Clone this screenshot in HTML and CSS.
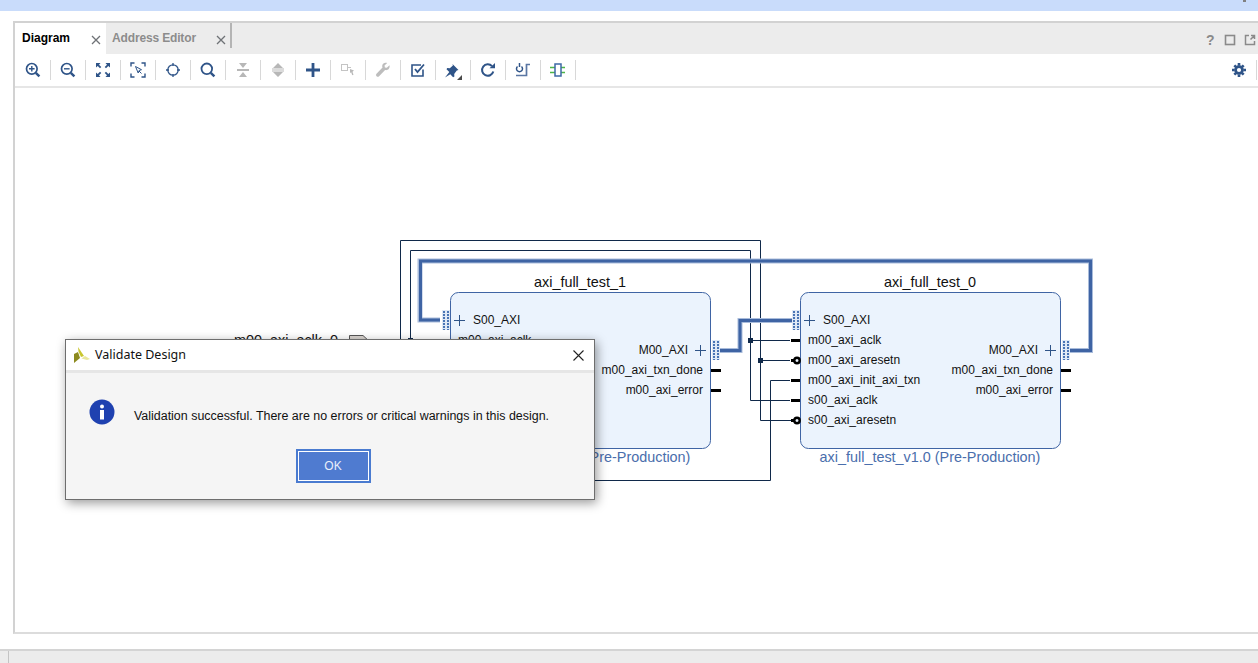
FILE: index.html
```html
<!DOCTYPE html>
<html lang="en">
<head>
<meta charset="utf-8">
<title>Validate Design</title>
<link rel="stylesheet" href="styles.css">
</head>
<body>
<div class="topbar"><span class="topmark"></span></div>
<main class="panel">
  <div class="tabbar">
    <div class="tab tab-active"><span>Diagram</span>
      <svg class="tabx" width="10" height="10" viewBox="0 0 10 10"><path d="M1 1l8 8M9 1l-8 8" stroke="#6f7276" stroke-width="1.3" fill="none"/></svg>
    </div>
    <div class="tab tab-idle"><span>Address Editor</span>
      <svg class="tabx" width="10" height="10" viewBox="0 0 10 10"><path d="M1 1l8 8M9 1l-8 8" stroke="#6f7276" stroke-width="1.3" fill="none"/></svg>
    </div>
    <div class="tabsep"></div>
    <div class="tabtools">
      <span class="help">?</span>
      <svg width="12" height="12" viewBox="0 0 12 12"><rect x="1.5" y="1.5" width="9" height="9" fill="none" stroke="#8a8a8a" stroke-width="1.6"/></svg>
      <svg width="12" height="12" viewBox="0 0 12 12"><path d="M5 1.5H1.5v9h9V7M7 1.5h3.5V5M10 2L6.5 5.5" fill="none" stroke="#8a8a8a" stroke-width="1.5"/></svg>
    </div>
  </div>
  <div class="toolbar">
    <div class="tool"><svg width="16" height="16" viewBox="0 0 16 16"><circle cx="6.8" cy="6.8" r="5.3" fill="none" stroke="#2f5488" stroke-width="1.7"/><path d="M4 6.8h5.6M6.8 4v5.6" stroke="#2f5488" stroke-width="1.4"/><path d="M10.8 10.8l3.6 3.6" stroke="#2f5488" stroke-width="2.4"/></svg></div>
    <div class="tool"><svg width="16" height="16" viewBox="0 0 16 16"><circle cx="6.8" cy="6.8" r="5.3" fill="none" stroke="#2f5488" stroke-width="1.7"/><path d="M4 6.8h5.6" stroke="#2f5488" stroke-width="1.4"/><path d="M10.8 10.8l3.6 3.6" stroke="#2f5488" stroke-width="2.4"/></svg></div>
    <div class="tool"><svg width="16" height="16" viewBox="0 0 16 16"><path d="M1 1h4.5L4 2.7 6.3 5 5 6.3 2.7 4 1 5.5zM15 1v4.5L13.3 4 11 6.3 9.7 5 12 2.7 10.5 1zM1 15v-4.5L2.7 12 5 9.7 6.300 11 4 13.300 5.500 15zM15 15h-4.500L12 13.300 9.700 11 11 9.700 13.300 12 15 10.500z" fill="#2f5488"/></svg></div>
    <div class="tool"><svg width="16" height="16" viewBox="0 0 16 16"><path d="M1 4.500V1h3.500M11.500 1H15v3.500M15 11.500V15h-3.500M4.500 15H1v-3.500" fill="none" stroke="#2f5488" stroke-width="1.400"/><path d="M5.500 4.500l6 3.200-2.400.8-.9 2.500z" fill="#fff" stroke="#2f5488" stroke-width="1"/><path d="M9 9l2.500 2.500" stroke="#2f5488" stroke-width="1"/></svg></div>
    <div class="tool"><svg width="16" height="16" viewBox="0 0 16 16"><circle cx="8" cy="8" r="5.200" fill="none" stroke="#2f5488" stroke-width="1.300"/><path d="M8 1v3M8 12v3M1 8h3M12 8h3" stroke="#2f5488" stroke-width="1.300"/></svg></div>
    <div class="tool"><svg width="16" height="16" viewBox="0 0 16 16"><circle cx="6.800" cy="6.800" r="5.300" fill="none" stroke="#2f5488" stroke-width="1.800"/><path d="M10.800 10.800l3.600 3.600" stroke="#2f5488" stroke-width="2.400"/></svg></div>
    <div class="tool"><svg width="14" height="16" viewBox="0 0 14 16"><path d="M1 7.500h12" stroke="#b7b7b7" stroke-width="1"/><path d="M1 8.500h12" stroke="#b7b7b7" stroke-width="1"/><path d="M3 1h8L7 6zM3 15h8L7 10z" fill="#b7b7b7"/></svg></div>
    <div class="tool"><svg width="14" height="16" viewBox="0 0 14 16"><path d="M1 7h12M1 9h12" stroke="#b7b7b7" stroke-width="1"/><path d="M2 6l5-5 5 5zM2 10l5 5 5-5z" fill="#b7b7b7"/></svg></div>
    <div class="tool"><svg width="14" height="14" viewBox="0 0 14 14"><path d="M7 0v14M0 7h14" stroke="#2f5488" stroke-width="2.800"/></svg></div>
    <div class="tool"><svg width="16" height="14" viewBox="0 0 16 14"><rect x="1.500" y="1.500" width="6" height="6" fill="#fff" stroke="#c4c4c4"/><path d="M8 4.500h3" stroke="#c4c4c4"/><path d="M10 6l4 1.500-1.500 1.300 1 3-1.300.4-1-3L10 10z" fill="#b9b9b9"/></svg></div>
    <div class="tool"><svg width="16" height="16" viewBox="0 0 16 16"><path d="M14.500 3.300l-2.700 2.500-1.900-.4-.4-1.900L12.200 1C10 .2 7.800 1 7.300 3.200c-.2.900-.1 1.700.2 2.300L1.500 11.700a1.800 1.800 0 0 0 2.600 2.500l6-6.100c2.500.7 5.200-1.500 4.400-4.800z" fill="#bdbdbd"/></svg></div>
    <div class="tool"><svg width="16" height="16" viewBox="0 0 16 16"><path d="M13 7.500V14H2V3h9" fill="none" stroke="#2f5488" stroke-width="1.600"/><path d="M5 7l2.500 3L14 2.500" fill="none" stroke="#2f5488" stroke-width="1.800"/></svg></div>
    <div class="tool tool-pin"><svg width="20" height="18" viewBox="0 0 20 18"><path d="M9.500 1l6 6-1.700.6-2.600 3.400.2 2.600-1.300.6-2.800-3L2 14.500 6.300 9 3.500 6.300 4.200 5l2.600.2 3.100-2.600z" fill="#2f5488"/><path d="M19 12v5h-5z" fill="#4a4a4a"/></svg></div>
    <div class="tool"><svg width="16" height="16" viewBox="0 0 16 16"><path d="M13.300 9.500a5.700 5.700 0 1 1-1.300-5.300" fill="none" stroke="#2f5488" stroke-width="2"/><path d="M9.500 6.300h5.500V1z" fill="#2f5488"/></svg></div>
    <div class="tool"><svg width="16" height="16" viewBox="0 0 16 16"><path d="M15 2.500h-3.500V13.500H1" fill="none" stroke="#5a76a3" stroke-width="1.700"/><path d="M6.500 4.500a3 3 0 1 1-4 0" fill="none" stroke="#2f5488" stroke-width="1.500"/><path d="M4.500 1v4" stroke="#2f5488" stroke-width="1.500"/></svg></div>
    <div class="tool"><svg width="16" height="14" viewBox="0 0 16 14"><path d="M0 4.500h15M0 9.500h15" stroke="#4db548" stroke-width="1.500"/><rect x="5" y="1" width="6" height="12" fill="#fff" stroke="#3d68a5" stroke-width="1.500"/></svg></div>
    <div class="toolspacer"></div>
    <svg class="gear" width="14" height="14" viewBox="0 0 16 16"><g fill="#2f5488"><circle cx="8" cy="8" r="5.500"/><path d="M6.500 0h3v3h-3zM6.500 13h3v3h-3zM0 6.500h3v3H0zM13 6.500h3v3h-3zM1.600 3.700l2.100-2.100 2.100 2.100-2.100 2.100zM10.200 12.300l2.100-2.100 2.100 2.100-2.100 2.100zM1.600 12.300l2.100-2.100 2.100 2.100-2.100 2.100zM10.200 3.700l2.100-2.100 2.100 2.100-2.100 2.100z"/></g><circle cx="8" cy="8" r="2.400" fill="#fff"/></svg>
    <span class="toolend"></span>
  </div>
  <div class="canvas">
    <svg class="diagram" width="1243" height="544" viewBox="15 88 1243 544">
      <g class="wire">
        <path d="M400.500 450V240.500H760.500V420.500H797"/>
        <path d="M410.500 450V250.500H750.500V400.500H790"/>
        <path d="M750.500 340.500H790M760.500 360.500H790"/>
        <path d="M400 480.500H770.500V380.500H790"/>
        <path d="M410.500 340.500H440"/>
      </g>
      <g class="dots">
        <rect x="748" y="338" width="5" height="5"/>
        <rect x="758" y="358" width="5" height="5"/>
        <rect x="408" y="338" width="5" height="5"/>
      </g>
      <path class="bus-halo" d="M440 320H420V261H1090.500V350.500H1066"/>
      <path class="bus" d="M440 320H420.500V261H1090.500V350.500H1068"/>
      <path class="bus-halo" d="M720 350.500H740V320.500H792"/>
      <path class="bus" d="M720 350.500H740V320.500H792"/>
      <rect class="block" x="450.500" y="292.500" width="260" height="156" rx="8"/>
      <rect class="block" x="800.500" y="292.500" width="260" height="156" rx="8"/>

      <text class="inst" x="580" y="287" text-anchor="middle">axi_full_test_1</text>
      <text class="inst" x="930" y="287" text-anchor="middle">axi_full_test_0</text>
      <text class="ver" x="580" y="462" text-anchor="middle">axi_full_test_v1.0 (Pre-Production)</text>
      <text class="ver" x="930" y="462" text-anchor="middle">axi_full_test_v1.0 (Pre-Production)</text>

      <text class="ext" x="234" y="345">m00_axi_aclk_0</text>
      <path class="extport" d="M349.500 335.500H363L371 343V350H349.500z"/>

      <g class="intf">
        <rect x="442" y="310" width="8" height="20" fill="#dfe9f6"/>
        <rect x="712" y="340" width="8" height="20" fill="#dfe9f6"/>
        <rect x="792" y="310" width="8" height="20" fill="#dfe9f6"/>
        <rect x="1062" y="340" width="8" height="20" fill="#dfe9f6"/>
      </g>
      <path class="dotted" d="M444 311v19M448 311v19M714 341v19M718 341v19M794 311v19M798 311v19M1064 341v19M1068 341v19"/>
      <path class="plus" d="M454 320.500h11M459.500 315v11M695 350.500h11M700.500 345v11M804 320.500h11M809.500 315v11M1045 350.500h11M1050.500 345v11"/>
      <path class="pin" d="M440 340.500h10M711 370.500h10M711 390.500h10M1061 370.500h10M1061 390.500h10M791 340.500h9M791 380.500h9M791 400.500h9M791 360.500h4M791 420.500h4"/>
      <circle class="neg" cx="797" cy="360.500" r="2.700"/>
      <circle class="neg" cx="797" cy="420.500" r="2.700"/>

      <g class="port">
        <text x="473" y="324">S00_AXI</text>
        <text x="458" y="344">m00_axi_aclk</text>
        <text x="688" y="354" text-anchor="end">M00_AXI</text>
        <text x="703" y="374" text-anchor="end">m00_axi_txn_done</text>
        <text x="703" y="394" text-anchor="end">m00_axi_error</text>
        <text x="823" y="324">S00_AXI</text>
        <text x="808" y="344">m00_axi_aclk</text>
        <text x="808" y="364">m00_axi_aresetn</text>
        <text x="808" y="384">m00_axi_init_axi_txn</text>
        <text x="808" y="404">s00_axi_aclk</text>
        <text x="808" y="424">s00_axi_aresetn</text>
        <text x="1038" y="354" text-anchor="end">M00_AXI</text>
        <text x="1053" y="374" text-anchor="end">m00_axi_txn_done</text>
        <text x="1053" y="394" text-anchor="end">m00_axi_error</text>
      </g>
    </svg>

    <section class="dialog">
      <header class="dlg-title">
        <svg class="logo" width="18" height="17" viewBox="0 0 18 17"><path d="M1 7L5 5 7 11 1 16z" fill="#8c8a1e"/><path d="M5 0L11 9 8 10 5.500 4.500z" fill="#c9c62e"/><path d="M8.500 11.500L12 9l5 3-3 1z" fill="#e9e79c"/></svg>
        <span class="dlg-name">Validate Design</span>
        <svg class="dlg-close" width="11" height="11" viewBox="0 0 11 11"><path d="M.5.500l10 10M10.500.500l-10 10" stroke="#222" stroke-width="1.100" fill="none"/></svg>
      </header>
      <div class="dlg-body">
        <div class="dlg-msg">
          <svg width="26" height="26" viewBox="0 0 26 26"><circle cx="13" cy="13" r="12.500" fill="#1f41b0"/><circle cx="13" cy="7.500" r="2" fill="#fff"/><rect x="11" y="11" width="4" height="9.500" fill="#fff"/></svg>
          <p>Validation successful. There are no errors or critical warnings in this design.</p>
        </div>
        <div class="dlg-actions"><button class="ok" type="button">OK</button></div>
      </div>
    </section>
  </div>
</main>
<footer class="status"><span class="status-sep"></span></footer>
</body>
</html>
```
FILE: styles.css
```css
* { box-sizing: border-box; }
html, body { margin: 0; padding: 0; height: 100%; overflow: hidden; background: #fff; }
body { font-family: "Liberation Sans", Arial, sans-serif; display: flex; flex-direction: column; }

.topbar { height: 11px; background: #c9dcfb; position: relative; flex: none; }
.topmark { position: absolute; left: 1243px; top: 0; width: 3px; height: 2px; background: #808080; }

.panel { flex: none; margin: 10px 0 0 13px; height: 613px; border: 2px solid #d2d2d2; border-right: 0; border-bottom-color: #dcdcdc; display: flex; flex-direction: column; }

.tabbar { height: 31px; flex: none; background: #ececec; display: flex; align-items: stretch; position: relative; }
.tab { font-size: 12px; font-weight: bold; display: flex; align-items: center; justify-content: space-between; padding: 0 5px 2px 7px; position: relative; }
.tab-active { width: 91px; background: #fff; color: #000; }
.tab-idle { width: 124px; padding: 0 4px 2px 6px; color: #8c8c8c; letter-spacing: -0.15px; }
.tabx { margin-top: 5px; }
.tabsep { width: 2px; height: 25px; background: #b4b4b4; flex: none; }
.tabtools { margin-left: auto; display: flex; align-items: center; gap: 8px; padding: 2px 1px 0 0; width: 52px; }
.help { font-size: 14px; font-weight: bold; color: #8a8a8a; width: 10px; }

.toolbar { height: 32px; flex: none; display: flex; align-items: center; background: #fff; padding-left: 1px; border-bottom: 0; }
.tool { width: 35px; height: 20px; flex: none; border-right: 1px solid #d8d8d8; display: flex; align-items: center; justify-content: center; padding-right: 1px; }
.tool-pin svg { margin: 3px 0 0 1px; }
.toolspacer { flex: 1; }
.gear { flex: none; margin-right: 10px; }
.toolend { width: 1px; height: 20px; background: #d8d8d8; margin-right: 1px; flex: none; }

.canvas { flex: 1; position: relative; border-top: 2px solid #e6e6e6; background: #fff; }
.diagram { display: block; position: absolute; left: 0; top: 0; }

.wire { fill: none; stroke: #10294a; stroke-width: 1; }
.dots { fill: #10294a; }
.bus { fill: none; stroke: #3f64a4; stroke-width: 3; }
.bus-halo { fill: none; stroke: #a9bcdb; stroke-width: 5; }
.block { fill: #ebf3fd; stroke: #3f64a4; stroke-width: 1; }
.inst { font-size: 14.4px; fill: #111; }
.ver { font-size: 14.4px; fill: #4a6eac; }
.ext { font-size: 14.4px; fill: #111; }
.extport { fill: #d9d4d0; stroke: #555; stroke-width: 1; }
.dotted { fill: none; stroke: #4a75b5; stroke-width: 2; stroke-dasharray: 2 1; }
.plus { fill: none; stroke: #2f5488; stroke-width: 1; }
.pin { fill: none; stroke: #000; stroke-width: 3; }
.neg { fill: #ebf3fd; stroke: #000; stroke-width: 2.4; }
.port text { font-size: 12px; fill: #111; }

.dialog { position: absolute; left: 50px; top: 251px; width: 530px; height: 161px; border: 1px solid #6e6e6e; background: #f5f5f5; box-shadow: 2px 3px 10px rgba(0,0,0,.4); display: flex; flex-direction: column; }
.dlg-title { height: 33px; flex: none; background: #fff; border-bottom: 3px solid #e6e6e6; display: flex; align-items: center; padding: 0 10px 0 7px; }
.logo { flex: none; margin-right: 4px; }
.dlg-name { font-family: "Noto Sans", sans-serif; font-size: 12.5px; color: #111; flex: 1; padding-bottom: 1px; }
.dlg-close { flex: none; margin-right: 0; }
.dlg-body { flex: 1; display: flex; flex-direction: column; }
.dlg-msg { display: flex; align-items: center; padding: 26px 0 0 23px; gap: 19px; }
.dlg-msg p { margin: 8px 0 0; font-size: 12.45px; color: #111; white-space: nowrap; }
.dlg-actions { display: flex; justify-content: center; margin-top: 24px; padding-left: 6px; }
.ok { width: 75px; height: 34px; background: #4f7bd0; border: 2px solid #4a7bd0; outline: 1px solid #fff; outline-offset: -3px; color: #e8eefa; font-family: "Liberation Sans", sans-serif; font-size: 12px; padding: 0; }

.status { flex: none; margin-top: 15px; height: 14px; background: #ececec; border-top: 2px solid #d4d4d4; position: relative; }
.status-sep { position: absolute; left: 8px; top: 0; width: 1px; height: 12px; background: #c4c4c4; }
```
